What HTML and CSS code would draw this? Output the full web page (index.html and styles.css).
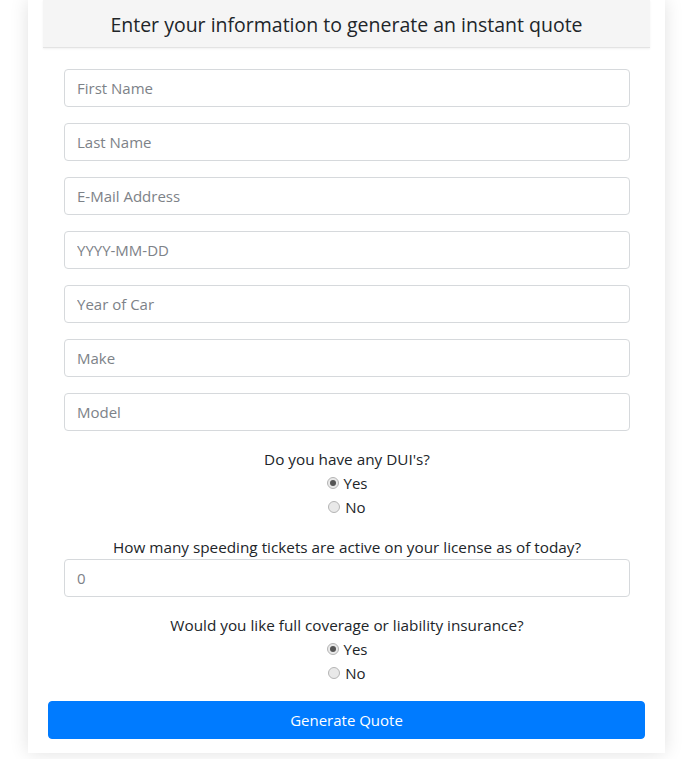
FILE: index.html
```
<!DOCTYPE html>
<html lang="en">
<head>
<meta charset="utf-8">
<title>Instant Quote</title>
<link rel="stylesheet" href="styles.css">
</head>
<body>
<div class="page">
  <div class="card">
    <div class="card-header">
      <h2 class="title">Enter your information to generate an instant quote</h2>
    </div>
    <form class="quote-form">
      <div class="fields">
        <input class="form-control" type="text" placeholder="First Name">
        <input class="form-control" type="text" placeholder="Last Name">
        <input class="form-control" type="text" placeholder="E-Mail Address">
        <input class="form-control" type="text" placeholder="YYYY-MM-DD">
        <input class="form-control" type="text" placeholder="Year of Car">
        <input class="form-control" type="text" placeholder="Make">
        <input class="form-control" type="text" placeholder="Model">
        <div class="question">
          <div class="q-label">Do you have any DUI's?</div>
          <label class="radio-row"><input class="radio" type="radio" name="dui" checked><span>Yes</span></label>
          <label class="radio-row"><input class="radio" type="radio" name="dui"><span>No</span></label>
        </div>
        <div class="question stretch">
          <div class="q-label">How many speeding tickets are active on your license as of today?</div>
          <input class="form-control" type="text" placeholder="0">
        </div>
        <div class="question">
          <div class="q-label">Would you like full coverage or liability insurance?</div>
          <label class="radio-row"><input class="radio" type="radio" name="cov" checked><span>Yes</span></label>
          <label class="radio-row"><input class="radio" type="radio" name="cov"><span>No</span></label>
        </div>
      </div>
      <button class="btn-primary" type="button">Generate Quote</button>
    </form>
  </div>
</div>
</body>
</html>
```

FILE: styles.css
```
* { box-sizing: border-box; }

html, body {
  margin: 0;
  padding: 0;
  background: #ffffff;
}

body {
  font-family: "Open Sans", "Noto Sans", sans-serif;
  color: #212529;
  font-size: 15px;
  line-height: 24px;
}

.page {
  padding-left: 28px;
  width: 699px;
  height: 759px;
  overflow: hidden;
}

.card {
  width: 637px;
  background: #ffffff;
  padding: 0 15px 14px;
  box-shadow: 0 0 18px rgba(0, 0, 0, 0.12);
}

.card-header {
  height: 48px;
  background: #f5f5f5;
  border-bottom: 1px solid #e3e3e3;
  box-shadow: 0 1px 2px rgba(0, 0, 0, 0.06);
  display: flex;
  align-items: center;
  justify-content: center;
}

.title {
  margin: 0;
  font-size: 19.5px;
  font-weight: 500;
  color: #212529;
  padding-top: 2px;
}

.quote-form {
  padding: 21px 5px 0;
  display: flex;
  flex-direction: column;
}

.fields {
  padding: 0 15px 0 16px;
  display: flex;
  flex-direction: column;
  gap: 16px;
}

.form-control {
  display: block;
  width: 100%;
  height: 38px;
  padding: 6px 12px;
  font-family: inherit;
  font-size: 15px;
  color: #495057;
  background: #ffffff;
  border: 1px solid #d6d9dc;
  border-radius: 4px;
  outline: none;
}

.form-control::placeholder {
  color: #7d8288;
}

.question {
  display: flex;
  flex-direction: column;
  align-items: center;
  color: #212529;
}

.question.stretch {
  align-items: stretch;
  text-align: center;
}

.q-label {
  height: 24px;
  font-size: 15.3px;
}

.radio-row {
  display: flex;
  align-items: center;
  height: 24px;
  gap: 5px;
  font-size: 15px;
  padding-left: 0;
}

.radio {
  -webkit-appearance: none;
  appearance: none;
  width: 12px;
  height: 12px;
  margin: 0;
  border-radius: 50%;
  border: 1px solid #b5b5b5;
  background: #e9e9e9;
  position: relative;
}

.radio:checked::after {
  content: "";
  position: absolute;
  left: 2px;
  top: 2px;
  width: 6px;
  height: 6px;
  border-radius: 50%;
  background: #555555;
}

.btn-primary {
  margin-top: 16px;
  height: 38px;
  width: 100%;
  background: #007bff;
  color: #ffffff;
  border: 1px solid #007bff;
  border-radius: 4px;
  font-family: inherit;
  font-size: 15px;
  cursor: pointer;
}
```
